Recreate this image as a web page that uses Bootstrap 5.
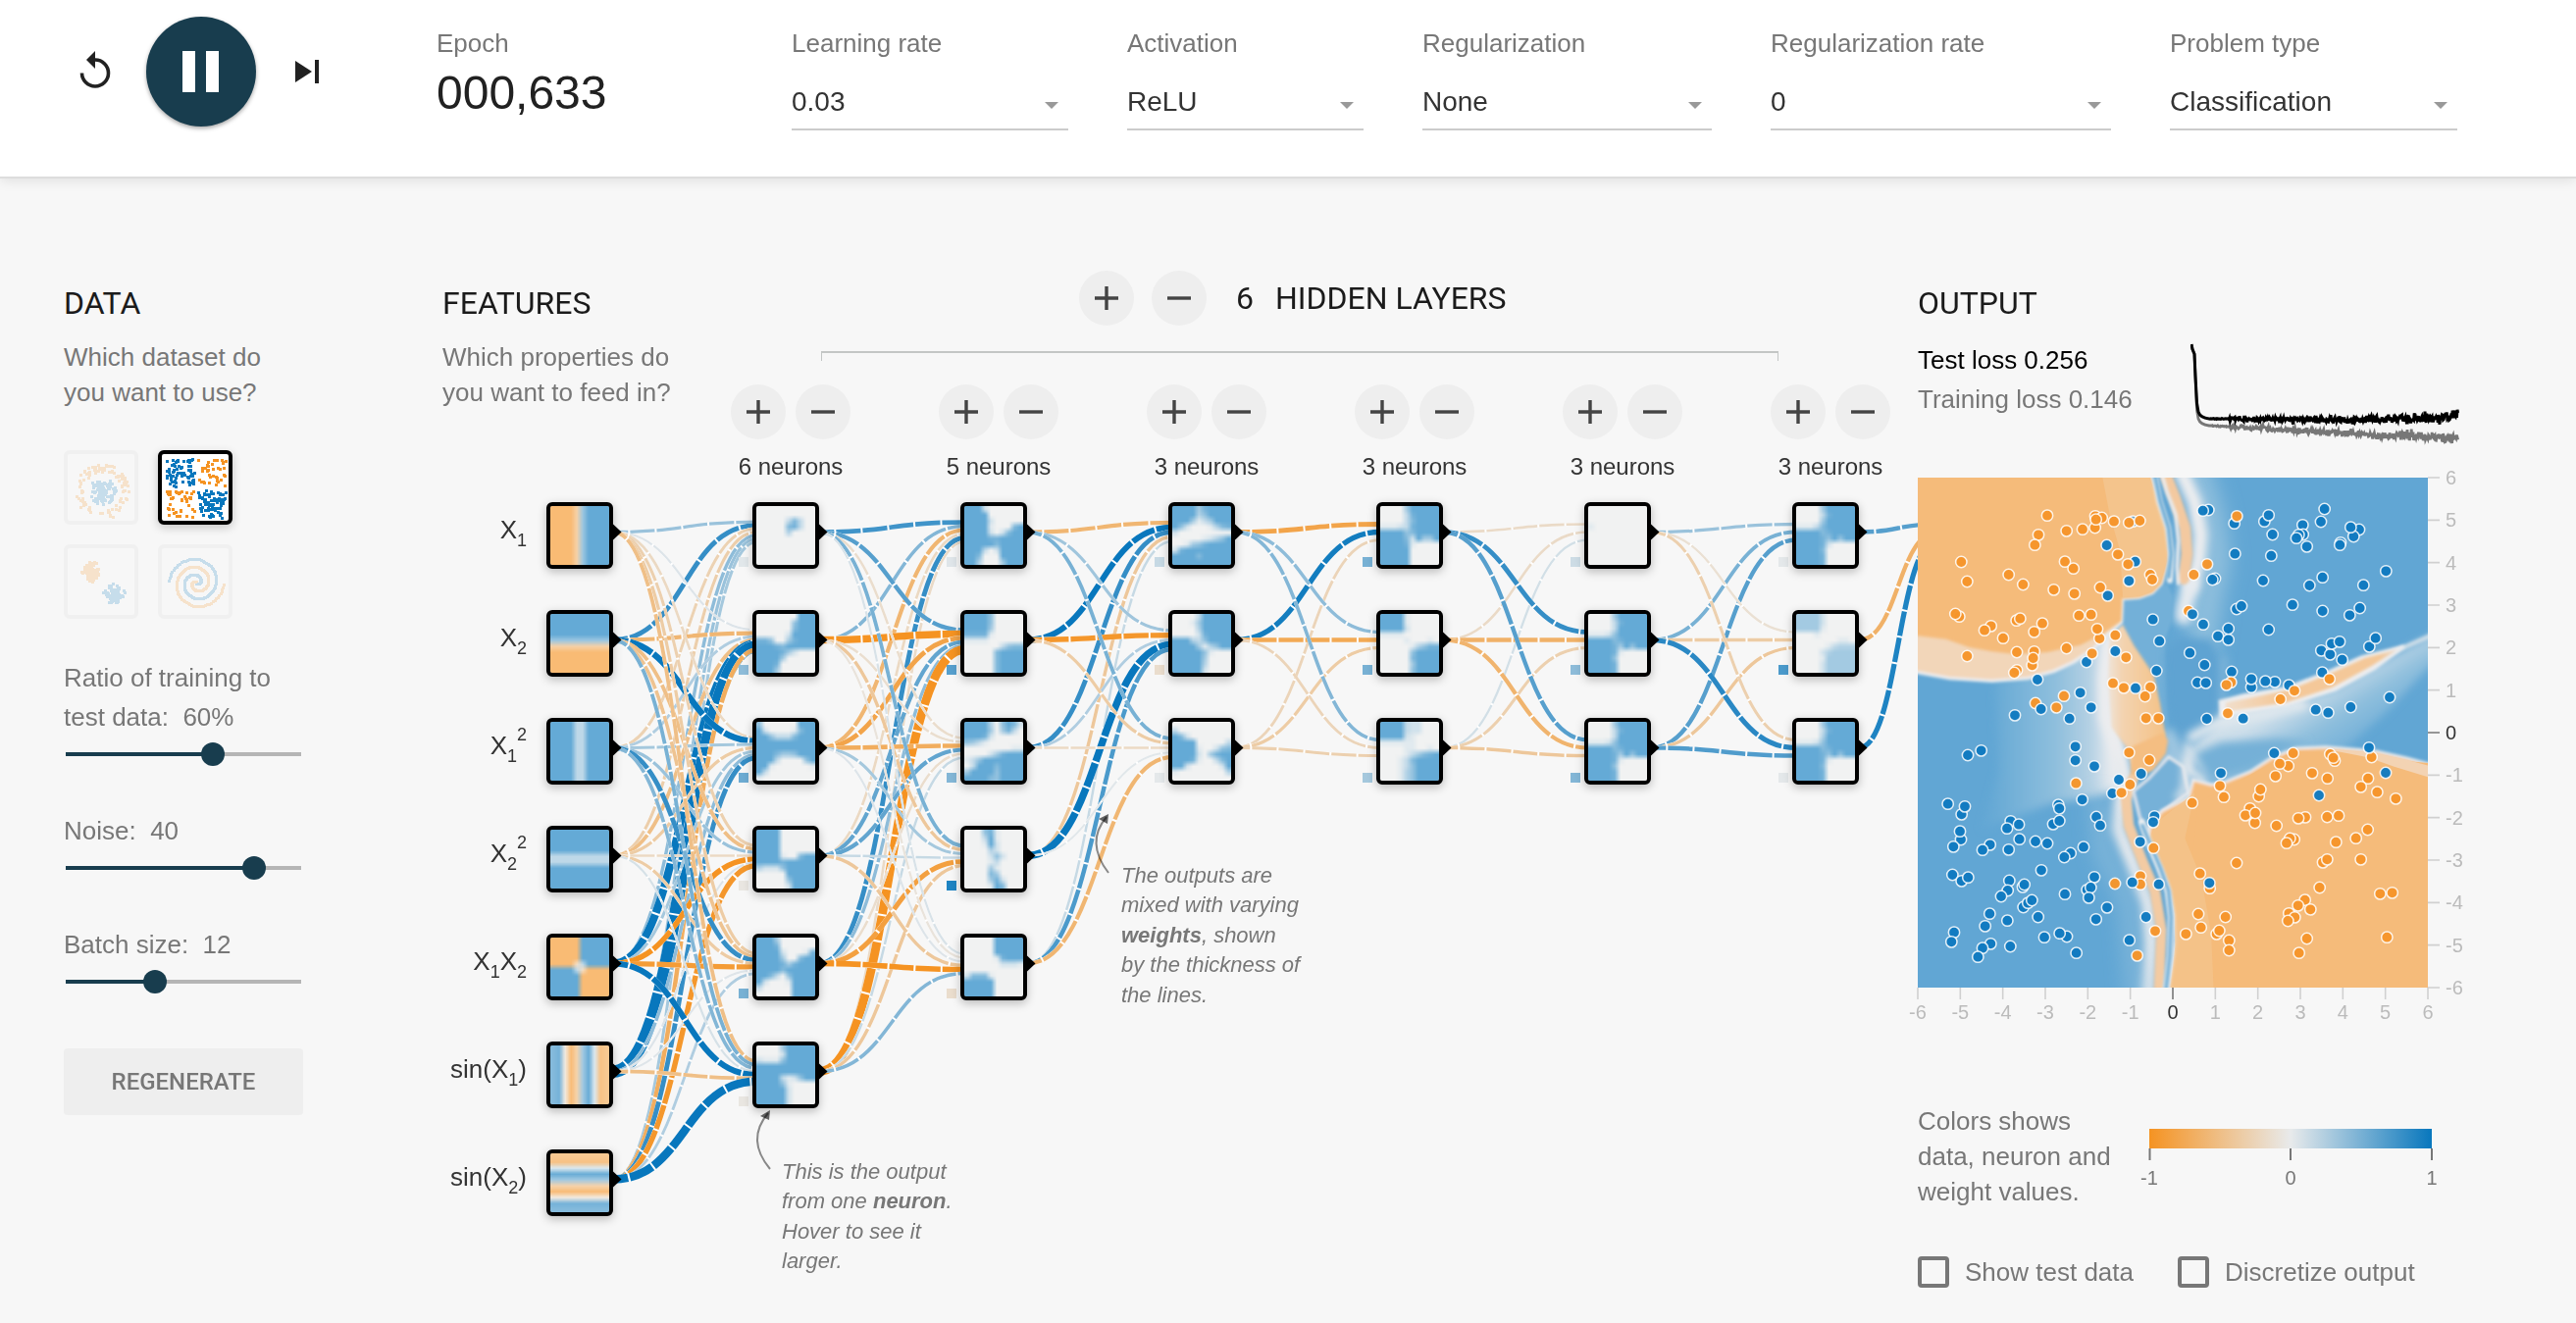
<!DOCTYPE html>
<html lang="en">
<head>
<meta charset="utf-8">
<title>Neural network playground</title>
<link href="https://cdn.jsdelivr.net/npm/bootstrap@5.3.0/dist/css/bootstrap.min.css" rel="stylesheet">
<style>
  html { height: 1349px; overflow: hidden; }
  body { background: #f7f7f7; font-family: "Liberation Sans", Arial, sans-serif; font-size: 26px; line-height: 36px; color: #777; width: 2626px; height: 1349px; overflow: hidden; }
  .topbar { height: 182px; background: #fff; border-bottom: 2px solid #ddd; box-shadow: 0 2px 12px rgba(0,0,0,.1); padding-left: 77px; }
  .playbtn { width: 112px; height: 112px; background: #183d4e; border: 0; box-shadow: 0 2px 4px rgba(0,0,0,.35); margin: 17px 32px 0 32px; }
  .ctl-label { line-height: 36px; margin-top: 26px; }
  .epoch { width: 362px; margin-left: 102px; }
  .epoch-num { font-size: 48px; line-height: 56px; color: #212121; margin-top: 5px; }
  .fakeselect { height: 50px; margin-top: 21px; border-bottom: 2px solid #ccc; font-size: 28px; line-height: 42px; color: #333; }
  .fakeselect span { margin-bottom: 7px; }
  .fakeselect::after { content: ""; border: 7.5px solid transparent; border-top: 7px solid #999; border-bottom: 0; margin-right: 10px; }
  h2.title { font: 400 32px/40px Roboto, sans-serif; color: #1b1b1b; margin: 107px 0 0; }
  .col-data { width: 244px; margin-left: 65px; }
  .thumbs { display: grid; grid-template-columns: 76px 76px; gap: 20px; margin-top: 41px; }
  .thumbs canvas { width: 76px; height: 76px; border: 4px solid #d8d8d8; border-radius: 6px; opacity: .2; }
  .thumbs canvas.on { border-color: #000; opacity: 1; background: #fff; box-shadow: 0 3px 10px rgba(0,0,0,.2); }
  .slab { line-height: 40px; }
  .slider { height: 24px; margin: 6px 2px 0; }
  .slider .fill { height: 4px; background: #183d4e; }
  .slider .knob { width: 24px; height: 24px; background: #183d4e; margin: 0 -12px; z-index: 1; }
  .slider .rest { height: 4px; background: #b5b5b5; }
  .regen { height: 68px; background: #eee; border-radius: 4px; font: 500 24px/68px Roboto, sans-serif; color: #777; margin-top: 56px; }
  .col-net { width: 1504px; margin-left: 142px; height: 1160px; }
  .features { width: 294px; }
  .circ { width: 56px; height: 56px; background: #eee; }
  .circ svg { width: 24px; height: 24px; }
  .bracket { margin: 26px 0 0 92px; width: 976px; height: 10px; border: 2px solid #c3c6c5; border-bottom: 0; border-left-width: 1px; border-right-width: 1px; }
  .layer-ctl { width: 122px; }
  .layer-ctl .cnt { font-size: 24px; line-height: 30px; color: #333; margin-top: 13px; white-space: nowrap; }
  .net-svg { left: 0; top: 0; width: 1504px; height: 1160px; }
  .nodebox { width: 68px; height: 68px; border: 4px solid #000; border-radius: 6px; box-shadow: 0 3px 10px rgba(0,0,0,.25); background: #fff; }
  .note { font-size: 22px; line-height: 30.4px; font-style: italic; }
  .col-out { width: 580px; }
  .losses { height: 140px; margin-top: 18px; line-height: 40px; }
  .losses svg { margin-left: 58px; }
  .legend-row { margin-top: 78px; }
  .opt { margin-top: 46px; }
  .tick-box { width: 32px; height: 32px; border: 4px solid #777; border-radius: 4px; }
  #out { overflow: visible; }
</style>
</head>
<body>
<header class="topbar d-flex align-items-start position-relative">
  <svg width="40" height="44" viewBox="0 0 40 44" style="margin-top:50px"><path d="M6.5 24.5a13.5 13.5 0 1 0 13.5-13.5" fill="none" stroke="#212121" stroke-width="3.6"/><path d="M20 2v18l-9-9z" fill="#212121"/></svg>
  <button class="playbtn rounded-circle p-0 d-flex align-items-center justify-content-center"><svg width="38" height="42"><path d="M0 0h13v42H0zM24 0h13v42H24z" fill="#fff"/></svg></button>
  <svg width="50" height="30" viewBox="-8 0 50 30" style="margin:59px 0 0 0"><path d="M0 2v22l17-11z" transform="translate(0 1)" fill="#212121"/><path d="M20 3h4v24h-4z" transform="translate(0 -1)" fill="#212121"/></svg>
  <div class="epoch" id="epoch"><div class="ctl-label">Epoch</div><div class="epoch-num">000,633</div></div>
  <div class="d-flex" id="selects" style="gap:60px"></div>
</header>

<main class="d-flex">
  <section class="col-data">
    <h2 class="title">DATA</h2>
    <div style="margin-top:17px">Which dataset do<br>you want to use?</div>
    <div class="thumbs"><canvas id="tc" width="68" height="68"></canvas><canvas id="tx" class="on" width="68" height="68"></canvas><canvas id="tg" width="68" height="68"></canvas><canvas id="ts" width="68" height="68"></canvas></div>
    <div class="slab" style="margin-top:40px">Ratio of training to<br>test data:&nbsp; 60%</div>
    <div class="slider d-flex align-items-center"><div class="fill" style="width:150px"></div><div class="knob rounded-circle"></div><div class="rest flex-fill"></div></div>
    <div class="slab" style="margin-top:46px">Noise:&nbsp; 40</div>
    <div class="slider d-flex align-items-center"><div class="fill" style="width:192px"></div><div class="knob rounded-circle"></div><div class="rest flex-fill"></div></div>
    <div class="slab" style="margin-top:46px">Batch size:&nbsp; 12</div>
    <div class="slider d-flex align-items-center"><div class="fill" style="width:91px"></div><div class="knob rounded-circle"></div><div class="rest flex-fill"></div></div>
    <div class="regen text-center">REGENERATE</div>
  </section>

  <section class="col-net position-relative" id="net">
    <svg class="net-svg position-absolute" id="links" viewBox="451 183 1504 1160"></svg>
    <div class="d-flex position-relative">
      <div class="features"><h2 class="title">FEATURES</h2><div style="margin-top:17px">Which properties do<br>you want to feed in?</div></div>
      <div style="padding-top:94px">
        <div class="d-flex align-items-center" style="padding-left:355px;gap:18px">
          <div class="circ rounded-circle d-flex align-items-center justify-content-center"><svg><path d="M12 0v24M0 12h24" stroke="#444" stroke-width="3.4"/></svg></div>
          <div class="circ rounded-circle d-flex align-items-center justify-content-center"><svg><path d="M0 12h24" stroke="#444" stroke-width="3.4"/></svg></div>
          <h2 class="title m-0 d-flex" style="padding-left:12px;gap:22px"><span>6</span><span>HIDDEN LAYERS</span></h2>
        </div>
        <div class="bracket"></div>
        <div class="d-flex" id="layers" style="gap:90px;margin-top:24px"></div>
      </div>
    </div>
    <div class="note position-absolute" style="left:346px;top:998px">This is the output<br>from one <b>neuron</b>.<br>Hover to see it<br>larger.</div>
    <div class="note position-absolute" style="left:692px;top:696px">The outputs are<br>mixed with varying<br><b>weights</b>, shown<br>by the thickness of<br>the lines.</div>
  </section>

  <section class="col-out">
    <h2 class="title">OUTPUT</h2>
    <div class="losses d-flex"><div style="width:220px;white-space:nowrap"><div class="text-black">Test loss 0.256</div><div>Training loss 0.146</div></div><svg id="loss" width="276" height="110" viewBox="2233 348 276 110"></svg></div>
    <svg id="out" class="d-block" width="580" height="560" viewBox="0 0 580 560"></svg>
    <div class="legend-row d-flex">
      <div style="width:216px;white-space:nowrap">Colors shows<br>data, neuron and<br>weight values.</div>
      <svg width="330" height="108"><defs><linearGradient id="lg"><stop offset="0" stop-color="#f59322"/><stop offset=".5" stop-color="#e8eaeb"/><stop offset="1" stop-color="#0877bd"/></linearGradient></defs>
        <rect x="20" y="26" width="288" height="20" fill="url(#lg)"/><path d="M20.5 46v12M164 46v12M308 46v12" stroke="#777" stroke-width="2"/>
        <g font-size="20" fill="#777" text-anchor="middle"><text x="20" y="83">-1</text><text x="164" y="83">0</text><text x="308" y="83">1</text></g></svg>
    </div>
    <div class="opt d-flex align-items-center">
      <div class="tick-box"></div><div style="width:217px;margin-left:16px">Show test data</div>
      <div class="tick-box"></div><div style="margin-left:16px">Discretize output</div>
    </div>
  </section>
</main>

<script src="https://cdn.jsdelivr.net/npm/bootstrap@5.3.0/dist/js/bootstrap.bundle.min.js"></script>
<script>
const $ = id => document.getElementById(id);
$('selects').innerHTML = [['Learning rate','0.03',282],['Activation','ReLU',241],['Regularization','None',295],['Regularization rate','0',347],['Problem type','Classification',293]]
  .map(([l,v,w]) => `<div style="width:${w}px"><div class="ctl-label">${l}</div><div class="fakeselect d-flex justify-content-between align-items-center"><span>${v}</span></div></div>`).join('');
const plus = '<svg><path d="M12 0v24M0 12h24" stroke="#444" stroke-width="3.4"/></svg>', minus = '<svg><path d="M0 12h24" stroke="#444" stroke-width="3.4"/></svg>';
$('layers').innerHTML = [6,5,3,3,3,3].map(n => `<div class="layer-ctl"><div class="d-flex" style="gap:10px">${[plus,minus].map(i => `<div class="circ rounded-circle d-flex align-items-center justify-content-center">${i}</div>`).join('')}</div><div class="cnt text-center">${n} neurons</div></div>`).join('');

let seed = 7;
const rnd = () => (seed = (seed * 16807) % 2147483647) / 2147483647;
const gauss = () => { let s = 0; for (let i = 0; i < 6; i++) s += rnd(); return (s - 3) / .707; };
const O = [245,147,34], Z = [232,234,235], B = [8,119,189];
const scale = v => { v = Math.max(-1, Math.min(1, v)); const c = v < 0 ? O : B, t = Math.abs(v); return Z.map((z, i) => Math.round(z + (c[i] - z) * t)); };
const rgb = v => `rgb(${scale(v)})`;

/* weights[layer][target][source] */
const W = [
 [[.35,.8,-.28,-.32,.4,.35,.3],[.05,-.6,.25,-.5,1.7,2.9,-.7],[-.2,1.2,.3,-.35,.3,.4,.8],[-.3,-.5,.35,-.2,-1,.05,-.95],[-.35,-.45,.8,-.35,-.9,.04,.25],[-.5,.5,.45,.08,1.1,-.5,1.8]],
 [[.75,.45,-.6,-.2,.8,-.18],[.65,-1.5,-.8,.6,.4,-1.9],[-.15,-.14,-.7,.6,-.15,.15],[.5,-.4,.3,.15,-.85,-.4],[.07,-.08,.05,-.4,-1,.45]],
 [[-.6,1.1,.8,-.4,.15],[.32,-.95,.25,1.5,.7],[.5,-.35,-.2,.03,-.6]],
 [[-.8,.95,-.25],[.4,-.75,-.35],[.45,-.25,-.3]],
 [[-.18,-.18,.1],[.8,-.65,-.3],[.65,-.62,-.4]],
 [[.35,.5,.65],[-.12,-.35,-.4],[-.3,.85,.68]],
 [[.65,-.65,.9]]
];
const colX = [557,767,979,1191,1403,1615,1827,1961];
let s = '';
W.forEach((L, l) => L.forEach((row, t) => row.forEach((w, i) => {
  const x0 = colX[l] + 68, y0 = 543.5 + 110 * i, x1 = colX[l+1] + (l == 6 ? 14 : 4), n = row.length, y1 = 543.5 + 110 * t + (i - (n-1)/2) / n * 24, m = (x0 + x1) / 2;
  const d = `M${x0} ${y0}C${m} ${y0} ${m} ${y1} ${x1} ${y1}`, sw = 2 * (1 + 1.8 * Math.abs(w));
  s += `<path d="${d}" stroke="#fff" stroke-width="${sw}" fill="none"/><path d="${d}" stroke="${rgb(w)}" stroke-width="${sw}" stroke-dasharray="25.2 2" stroke-dashoffset="10" fill="none"/>`;
})));
[7,6,5,3,3,3,3].forEach((n, l) => { for (let i = 0; i < n; i++) { const x = colX[l] + 67, y = 543.5 + 110 * i; s += `<path d="M${x} ${y-9}L${x+9.5} ${y}L${x} ${y+9}z"/>`; } });
const bias = [[.03,.4,.55,-.05,.5,-.05],[.04,.65,.45,.9,-.15],[.15,-.15,.02],[.5,.5,.3],[.12,.4,.45],[.02,.7,.02]];
bias.forEach((b, l) => b.forEach((v, i) => s += `<rect x="${colX[l+1]-14}" y="${569+110*i}" width="10" height="10" fill="${rgb(v)}"/>`));
const sub = (t, d) => `<tspan font-size="18" dy="${d}">${t}</tspan>`;
[`X${sub(1,8)}`,`X${sub(2,8)}`,`X${sub(1,8)}${sub(2,-22)}`,`X${sub(2,8)}${sub(2,-22)}`,`X${sub(1,8)}<tspan dy="-8">X</tspan>${sub(2,8)}`,`sin(X${sub(1,8)}<tspan dy="-8">)</tspan>`,`sin(X${sub(2,8)}<tspan dy="-8">)</tspan>`]
  .forEach((t, i) => s += `<text x="537" y="${550+110*i}" text-anchor="end" font-size="26" fill="#333">${t}</text>`);
s += `<g fill="none" stroke="#000" stroke-opacity=".45" stroke-width="2"><path d="M785 1193Q760 1163 783 1136"/><path d="M1130 891Q1106 860 1128 834"/></g><g fill="#000" fill-opacity=".6"><path d="M785 1133l-10 6 9 4z"/><path d="M1130 831l-10 5 9 5z"/></g>`;
$('links').innerHTML = s;

/* 10x10 activation grids, 0..9 */
const G = [
['0000000000 0000000000 0000037300 0000078300 0000040000 0000000000 0000000000 0000000000 0000000000 0000000000',
 '0000000999 0000006999 0000007999 0000029999 8860058999 9998799999 9999852000 9999500000 9998000000 9995000000',
 '6000000999 9200001799 9963337999 9999999999 9999999999 9997556999 9993000069 9910000001 9300000000 1000000000',
 '9999000000 9999000000 9999000000 9999000000 9999100799 9999899999 4222699999 0000099999 0000069999 0000029999',
 '9995000000 9998000000 9999200018 9999500799 9999858999 9999799999 9973069999 9200019999 3000009999 0000009999',
 '0000599999 0000299999 2111699999 9999999999 9999999999 9999312699 9999610000 9999920000 9999920000 9999920000'],
['9992000000 9999000000 9999200000 9999100079 9999202799 9999889999 9999979999 9993029999 9970009999 9940005999',
 '9999600000 9999600000 9999500000 8888100000 1111000000 0000003677 0000079999 0000079999 0000079999 0000079999',
 '9999406972 9999505830 9998200000 6531000000 0000000011 0000258999 1369999999 0399979999 5999969999 9999769999',
 '0006810000 0003910000 0001920000 0000420000 0000262000 0000130000 0000510000 0000750000 0000582000 0000197000',
 '0000099999 0000099999 0000099999 0000018999 0000002221 0000000000 2777100000 9999900000 9999900000 9999900000'],
['9999589999 9999469999 9995135999 9620001478 2000000000 0000012469 0015689999 2899999999 9999799999 9999999999',
 '0000399999 0001599999 0000499999 0000289999 9994369999 9999514699 9999961000 9999950000 9999940000 9999920000',
 '0000000000 3000000000 9720000000 9999000003 9999100267 9999205899 9998100379 9920000029 1000000004 0000000000'],
['0000599999 0000389999 0000379999 1112389999 9999679999 9999729559 9999810000 9999900000 9999900000 9999900000',
 '9999100000 9999100000 9999200000 1111000000 0000100010 0000014688 0000069999 0000079999 0000059999 0000069999',
 '9999322000 9999322000 9999210000 1111110000 0000110010 0000135789 0001379999 0001369999 0001469999 0001469999'],
['0000000000 0000000000 0000000000 1000000000 0000000000 0000000000 0000000000 0000000000 0000000000 0000000000',
 '0000599999 0000389999 0000399999 1112699999 9999789999 9999859699 9999810000 9999600000 9999800000 9999800000',
 '0000599999 0000389999 0000399999 1112699999 9999789999 9999859699 9999810000 9999600000 9999800000 9999800000'],
['0000599999 0000389999 0000599999 1113799999 9999789999 9999869699 9999820000 9999700000 9999800000 9999800000',
 '5555200000 5555200000 5555100000 0001000000 0000000110 0000013444 0000245555 0000155555 0000255555 0000255555',
 '0000599999 0000389999 0000499999 1112699999 9999789999 9999869699 9999810000 9999700000 9999800000 9999800000']];
const feats = [(x,y)=>x,(x,y)=>y,(x,y)=>x*x,(x,y)=>y*y,(x,y)=>x*y,(x,y)=>Math.sin(x),(x,y)=>Math.sin(y)];
function node(l, i, f) {
  const c = document.createElement('canvas'); c.width = c.height = 10; c.className = 'nodebox position-absolute';
  c.style.left = colX[l] - 451 + 'px'; c.style.top = 513 + 110 * i - 183 + 'px';
  const g = c.getContext('2d'), im = g.createImageData(10, 10);
  for (let r = 0; r < 10; r++) for (let q = 0; q < 10; q++) { const k = scale(f(q, r)), o = (r * 10 + q) * 4; im.data[o] = k[0]; im.data[o+1] = k[1]; im.data[o+2] = k[2]; im.data[o+3] = 160; }
  g.putImageData(im, 0, 0); $('net').append(c);
}
feats.forEach((f, i) => node(0, i, (q, r) => f(-5.4 + 1.2 * q, 5.4 - 1.2 * r)));
G.forEach((L, l) => L.forEach((t, i) => { const rows = t.split(' '); node(l + 1, i, (q, r) => rows[r][q] / 9); }));

/* dataset thumbnails */
const dot = (g, x, y, b) => { g.fillStyle = b ? '#0877bd' : '#f59322'; g.fillRect(Math.round(x) - 1, Math.round(y) - 1, 3, 3); };
let g = $('tc').getContext('2d');
for (let i = 0; i < 110; i++) { let a = rnd() * 6.283, r = 20 + rnd() * 8; dot(g, 35 + r * Math.cos(a), 39 + r * Math.sin(a) - 1, 0); a = rnd() * 6.283; r = 14 * rnd(); dot(g, 35 + r * Math.cos(a), 38 + r * Math.sin(a), 1); }
g = $('tx').getContext('2d');
for (let i = 0; i < 230; i++) { const x = rnd() * 2 - 1, y = rnd() * 2 - 1; dot(g, 35 + x * 28 + Math.sign(x) * 2, 35 + y * 28 + Math.sign(y) * 2, x * y > 0); }
g = $('tg').getContext('2d');
for (let i = 0; i < 110; i++) { dot(g, 24 + gauss() * 4, 24 + gauss() * 4, 0); dot(g, 47 + gauss() * 4, 46 + gauss() * 4, 1); }
g = $('ts').getContext('2d');
for (let i = 0; i < 130; i++) { const r = i / 130 * 28, t = 3.5 * Math.PI * i / 130; dot(g, 35 + r * Math.sin(t), 35 + r * Math.cos(t), 1); dot(g, 35 - r * Math.sin(t), 35 - r * Math.cos(t), 0); }

/* loss curves */
function curve(y0, noise, late) {
  let d = 'M2234 352L2235 357L2237 362L2238 385L2239.5 ' + (y0 - 15) + 'L2241 ' + (y0 - 6) + 'Q2243 ' + y0 + ' 2252 ' + (y0 + 1);
  for (let x = 2253; x <= 2506; x += .6) { const t = (x - 2253) / 253; d += `L${x.toFixed(1)} ${(y0 + 1 + late(t) + gauss() * noise * (t < .08 ? .15 : .5 + t * .8)).toFixed(1)}`; }
  return d;
}
$('loss').innerHTML = `<path d="${curve(434,2,t=>14*t-(t>.75?1:0))}" fill="none" stroke="#777" stroke-width="2.8"/><path d="${curve(427,2.1,t=>t<.45?2.5*t:t<.9?2-2*t:-5*(t-.9)*10*.9)}" fill="none" stroke="#000" stroke-width="3"/>`;

/* decision surface, painted in a 1560-unit square */
const P = (d, f, x = '') => `<path d="${d}" fill="${f}" ${x}/>`, S = (d, c, w, b, x = '') => `<path d="${d}" fill="none" stroke="${c}" stroke-width="${w}" filter="url(#b${b})" stroke-linecap="round" ${x}/>`;
const BL = '#61a6d4', OR = '#f5bb7a', LO = '#f4c48c', WH = '#ecedef';
let h = `<defs><filter id="b1" filterUnits="userSpaceOnUse" x="-100" y="-100" width="1800" height="1800"><feGaussianBlur stdDeviation="5"/></filter><filter id="b2" filterUnits="userSpaceOnUse" x="-100" y="-100" width="1800" height="1800"><feGaussianBlur stdDeviation="13"/></filter><filter id="b3" filterUnits="userSpaceOnUse" x="-100" y="-100" width="1800" height="1800"><feGaussianBlur stdDeviation="28"/></filter>
<linearGradient id="gl" gradientUnits="userSpaceOnUse" x1="230" y1="0" x2="590" y2="0"><stop offset="0" stop-color="#66a9d5"/><stop offset=".55" stop-color="#8fbfdd"/><stop offset=".85" stop-color="#b7d2e4"/><stop offset="1" stop-color="#e6eaee"/></linearGradient>
<linearGradient id="gm" gradientUnits="userSpaceOnUse" x1="580" y1="0" x2="740" y2="0"><stop offset="0" stop-color="#efe6dd"/><stop offset=".3" stop-color="#f3d3b0"/><stop offset="1" stop-color="#f4c48c"/></linearGradient>
<linearGradient id="gw" gradientUnits="userSpaceOnUse" x1="1150" y1="690" x2="1270" y2="880"><stop offset="0" stop-color="#cfdfea"/><stop offset=".5" stop-color="#8fbfdd"/><stop offset="1" stop-color="#70aed7"/></linearGradient>
<linearGradient id="gs" gradientUnits="userSpaceOnUse" x1="940" y1="0" x2="1500" y2="0"><stop offset="0" stop-color="#f1dfcd"/><stop offset=".3" stop-color="#f4c899"/><stop offset=".85" stop-color="#f4c899"/><stop offset="1" stop-color="#e3e0dd"/></linearGradient>
<clipPath id="cp"><rect x="3" y="6" width="1560" height="1560"/></clipPath></defs>
<g transform="scale(.33333) translate(-3 -6)"><g clip-path="url(#cp)"><rect width="1570" height="1570" fill="${BL}"/>`;
h += P('M240 630L420 590L520 520L600 480L640 960L540 985L420 1000L200 1080L250 900Z','url(#gl)','filter="url(#b2)"');
h += S('M850 -20L895 120L915 260L890 380L865 560','#8fbfdd',90,3) + S('M800 -30L850 80L868 180L862 260L838 340','#f0eff0',44,2) + S('M838 330L820 400L816 430','#e6ebf0',52,2);
h += S('M750 -30L790 70L820 160L826 240L816 315','#f3c9a0',36,1) + S('M742 -30L765 50L792 120L800 200L796 280L800 330',WH,11,1);
h += P('M626 376L700 366L765 330L784 370L780 440L760 500L770 790L745 700L720 610L660 510L626 450Z','#73b0d8','filter="url(#b1)"');
h += P('M900 500L930 560L935 740L860 790L790 790L765 700L760 540L800 490Z','#5fa3d2','filter="url(#b2)"');
h += S('M940 560L932 730','#86b9dc',16,2);
/* wedge right of the centre */
h += P('M820 850L935 742L1130 706L1290 646L1420 570L1590 480L1590 560L1440 720L1300 845L1100 850L960 930L900 935Z','url(#gw)','filter="url(#b2)"');
h += S('M840 800L935 748L1060 725L1180 700','#e9edf0',30,2) + S('M825 830L830 900L880 935',WH,26,2) + P('M850 850L930 815L1100 805L1200 815L1140 835L1020 900L900 935Z','#74b0d7','filter="url(#b2)"');
h += S('M770 800L800 860L770 870L820 960','#9cc5e0',50,2) + S('M1400 570L1480 530L1590 482','#c9dbe7',14,1);
h += P('M928 690L1000 672L1130 650L1260 600L1360 555L1490 522L1400 590L1280 655L1130 702L930 735Z',WH,'filter="url(#b1)" stroke="#ecedef" stroke-width="10"') + P('M945 694L1010 682L1140 655L1270 603L1370 558L1470 532L1390 583L1270 648L1130 694L945 722Z','url(#gs)','filter="url(#b1)"');
/* centre-left column */
h += S('M592 500L575 620L578 740L620 850L640 930L622 1000L615 1080L660 1190L705 1310L715 1430L705 1590',WH,44,2) + S('M560 1000L570 1150L650 1300L670 1590','#8abcdc',60,3,'opacity=".7"');
h += P('M590 490L630 455L665 520L725 610L745 700L760 790L720 880L660 900L640 830L596 770L585 620Z','url(#gm)','filter="url(#b1)"') + P('M660 828L755 785L768 810L762 850L725 900L670 930L650 960Z','#f4be82','filter="url(#b1)"');
h += S('M660 930L640 990L648 1070L690 1180L728 1270L748 1390L740 1590','#f3cba3',32,1);
h += P('M662 965L710 925L770 860L815 890L830 970L750 1030L712 1070L706 1110L680 1040Z','#76b1d8','stroke="#ecedef" stroke-width="8" filter="url(#b1)"') + S('M825 860L820 960L800 985',WH,20,2);
/* orange bodies */
h += P('M830 985L845 930L900 945L940 938L1020 905L1090 860L1160 834L1250 830L1400 842L1500 865L1575 885L1575 1575L765 1575L782 1490L792 1420L785 1330L765 1250L735 1180L705 1110L715 1070L750 1025Z',OR,'stroke="#ecedef" stroke-width="9" filter="url(#b1)"');
h += P('M1150 842L1575 880L1575 1575L800 1575L860 1000L1020 915Z',OR) + P('M850 970L735 1060L712 1110L745 1180L775 1260L788 1340L790 1440L775 1575L908 1575L900 1400L870 1230L820 1110Z',LO,'opacity=".8"') + P('M1250 836L1400 848L1500 870L1570 888L1570 924L1460 890L1380 862Z','#f3d3b3');
h += S('M688 1060L712 1130L742 1200L768 1270L778 1350L775 1470L760 1590','#eef0f1',20,1) + S('M690 1070L715 1130L745 1200L770 1270L778 1350L774 1470L760 1590','#6fadd6',11,1);
h += P('M-10 -10L712 -10L742 90L766 170L768 260L748 330L720 358L680 372L628 376L625 450L580 490L540 530L480 570L420 598L340 620L230 628L100 620L-10 600Z','#f2d6b9','stroke="#ecedef" stroke-width="10" filter="url(#b1)"');
h += P('M-10 -10L712 -10L742 90L766 170L768 260L748 330L720 358L680 372L628 376L625 445L560 488L500 518L400 540L300 546L230 538L160 525L90 500L-10 488Z',OR,'filter="url(#b1)"') + P('M567 0L708 0L738 90L762 170L764 260L744 328L718 355L680 368L630 372L622 230L590 120Z',LO);
h += S('M722 -30L742 80L768 160L778 240L774 320','#eef0f1',18,1) + S('M722 -30L745 80L770 160L778 240L770 310','#6fadd6',12,1);
h += '</g>';
const ob = '399,122 372,181 361,212 458,169 507,164 545,159 546,124 566,129 548,134 603,140 661,140b 649,144 682,138 615,241 646,271 136,264 154,324 281,303 325,333 453,263 479,284 419,349 482,361 130,431 118,423 227,460 207,473 305,443 316,437 384,452 359,478 264,497 496,428 533,425 561,342 714,303 720,318 559,498 552,469 607,488 306,540 359,538 353,580 356,558 458,528 536,544 154,552 306,595 298,603 640,556 600,635 633,649 714,647 698,675 450,674 363,696 427,709 701,742 739,742 649,847 711,870 487,941 652,945 888,271 847,303 831,414 961,632 947,640 951,727 1112,684 1155,658 1262,622 1151,849 1136,888 1110,881 1097,919 1264,852 1278,872 1274,863 1391,861 1209,910 1256,926 1380,926 1358,952 1408,968 1465,988 927,949 939,983 842,1001 1046,981 1051,960 1019,1018 1005,1039 1034,1062 1035,1032 1100,1071 1188,1045 1167,1048 1255,1044 1290,1040 1379,1083 1343,1109 1282,1121 1154,1113 1141,1110 1131,1124 724,1139 978,1185 1242,1183 1255,1174 1358,1174 1232,1260 866,1217 684,1225 684,1250 606,1248 896,1262 1454,1276 1417,1279 1187,1298 1166,1315 1204,1327 1138,1339 1156,1351 1135,1362 861,1341 944,1350 869,1382 917,1402 925,1392 955,1422 955,1452 823,1402 729,1393 674,1468 1193,1416 1169,1460 1438,1412 626,970 979,124';
const bb = '892,105 875,107 971,146 1063,140 1076,121 973,239 1088,180 1084,245 1180,151 1181,180 1168,181 1161,191 1193,217 1236,141 1247,102 1353,165 1336,186 1327,158 1296,205 1294,212 1435,292 912,315 904,318 1059,321 1241,311 1201,336 1366,335 978,408 993,399 1149,395 1241,414 1355,405 1324,427 581,213 668,263 649,322 584,367 722,440 742,506 607,537 519,570 733,597 876,455 921,491 953,468 953,502 1076,471 835,542 880,579 858,633 884,634 963,600 1023,647 1023,622 1095,631 1066,629 1138,641 1240,602 1237,535 1264,547 1269,514 1293,508 1301,563 1384,523 1403,497 369,624 500,664 533,709 467,743 300,733 669,650 887,744 998,743 1220,716 1258,725 1327,708 1446,678 485,829 485,871 543,889 197,841 156,855 1093,849 1434,909 1230,978 930,910 686,912 618,930 598,972 506,991 95,1004 137,1036 147,1012 433,1007 436,1018 417,1066 436,1056 287,1057 312,1067 276,1079 549,1044 561,1070 727,1042 723,1060 135,1113 132,1088 112,1135 224,1129 201,1145 314,1112 281,1144 363,1119 399,1125 510,1136 470,1155 451,1167 683,1120 381,1207 109,1221 137,1240 157,1229 283,1239 278,1269 258,1287 324,1258 329,1251 543,1228 521,1267 532,1260 526,1291 453,1280 740,1250 326,1320 340,1307 352,1299 582,1321 371,1350 548,1357 701,1350 223,1340 209,1378 277,1361 114,1397 106,1426 459,1410 437,1400 390,1412 650,1421 226,1432 201,1445 187,1472 286,1440 488,1460';
const top2 = '843,424 380,714 1383,832 659,1244 895,1246';
const dots = (l, c) => l.split(' ').map(p => { const blue = p.endsWith('b'), [x, y] = p.replace('b', '').split(','); return `<circle cx="${x}" cy="${y}" r="17" fill="${blue ? '#6fa3c4' : c}"/>`; }).join('');
h += `<g stroke="#fff" stroke-opacity=".85" stroke-width="4.6" fill-opacity=".97">${dots(bb, '#0f7ac0')}${dots(ob, '#f6952a')}${dots(top2, '#0f7ac0')}</g></g>`;
for (let v = -6; v <= 6; v++) {
  const k = (v + 6) * 520 / 12, c = v ? '#d0d0d0' : '#777', f = v ? '#bbb' : '#333';
  h += `<path d="M${k} 520v12M520 ${520-k}h12" stroke="${c}" stroke-width="1.6"/><g font-size="20" fill="${f}"><text x="${k}" y="552" text-anchor="middle">${v}</text><text x="538" y="${527-k}">${v}</text></g>`;
}
$('out').innerHTML = h;
</script>
</body>
</html>
